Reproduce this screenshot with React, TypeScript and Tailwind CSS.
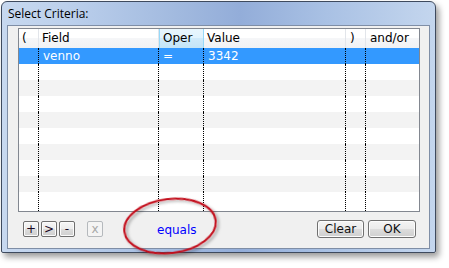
import React from "react";

const cols = [20, 120, 45, 142, 20, 53];
const headers = ["(", "Field", "Oper", "Value", ")", "and/or"];
const pads = [3, 3, 3, 3, 4, 4];

function Row({ kind, cells, grow }: { kind: "sel" | "w" | "g"; cells?: string[]; grow?: boolean }) {
  const bg = kind === "sel" ? "bg-[#3399ff] text-white" : kind === "g" ? "bg-[#f3f3f3]" : "bg-white";
  return (
    <div className={`flex ${grow ? "flex-1" : "h-[16px]"} ${bg}`}>
      {cols.map((w, i) => (
        <div
          key={i}
          style={{ width: w, paddingLeft: pads[i] + 1 }}
          className={`shrink-0 leading-[16px] whitespace-nowrap ${i < 5 ? "border-r border-dotted border-black" : ""}`}
        >
          {cells ? cells[i] : ""}
        </div>
      ))}
    </div>
  );
}

function SmallBtn({ label, disabled }: { label: string; disabled?: boolean }) {
  return (
    <div
      className={`w-[16px] h-[16px] rounded-[2px] border flex items-center justify-center text-[12px] leading-none ${
        disabled
          ? "border-[#b5b9bd] bg-[#f4f4f4] text-[#a8a8a8]"
          : "border-[#6f6f6f] bg-[linear-gradient(to_bottom,#f6f6f6_0%,#ececec_50%,#dcdcdc_50%,#cfcfcf_100%)] text-[#1a0a24] shadow-[inset_0_0_0_1px_#fbfbfb]"
      }`}
    >
      {label}
    </div>
  );
}

function Btn({ label, w }: { label: string; w: number }) {
  return (
    <div
      style={{ width: w }}
      className="h-[18px] rounded-[3px] border border-[#707070] bg-[linear-gradient(to_bottom,#f4f4f4_0%,#ebebeb_50%,#dddddd_50%,#cfcfcf_100%)] shadow-[inset_0_0_0_1px_#fcfcfc] flex items-center justify-center text-[12px] text-[#101010]"
    >
      {label}
    </div>
  );
}

export default function App() {
  return (
    <div className="relative w-[449px] h-[268px] bg-white overflow-hidden" style={{ fontFamily: '"DejaVu Sans", Verdana, sans-serif' }}>
      <div className="ml-[1px] mt-[1px] w-[435px] h-[252px] border border-[#3e4a5e] rounded-t-[6px] rounded-b-[2px] shadow-[3px_4px_6px_rgba(0,0,0,0.4)] flex flex-col bg-[linear-gradient(to_right,#c7d8ef_0%,#bcd0ec_15%,#a2badf_40%,#93add9_55%,#a9c1e4_75%,#c4d6ee_100%)]">
        <div className="h-[23px] shrink-0 flex items-center pl-[6px] pt-[1px] text-[12px] text-black" style={{ fontFamily: '"Open Sans", "Noto Sans", sans-serif' }}>
          Select Criteria:
        </div>
        <div className="mx-[5px] h-[224px] shrink-0 border border-[#7f8ea6] bg-[#f0f0f0] flex flex-col">
          <div className="ml-[10px] mt-[2px] w-[402px] h-[184px] border border-[#828790] bg-white flex flex-col text-[12px] text-black">
            <div className="flex h-[19px] shrink-0 bg-[linear-gradient(to_bottom,#ffffff_0%,#ffffff_50%,#f5f6f8_50%,#f1f2f4_100%)]">
              {cols.map((w, i) => (
                <div
                  key={i}
                  style={{ width: w, paddingLeft: pads[i] }}
                  className={`shrink-0 leading-[18px] whitespace-nowrap border-r ${
                    i === 2
                      ? "border-[#96d9f9] border-l bg-[linear-gradient(to_bottom,#e8f6fd_0%,#e0f3fd_50%,#cfeafa_50%,#c3e4f7_100%)]"
                      : "border-[#e2e5ea]"
                  } ${i === 5 ? "border-r-0" : ""}`}
                >
                  {headers[i]}
                </div>
              ))}
            </div>
            <div className="flex-1 flex flex-col">
              <Row kind="sel" cells={["", "venno", "=", "3342", "", ""]} />
              <Row kind="w" />
              <Row kind="g" />
              <Row kind="w" />
              <Row kind="g" />
              <Row kind="w" />
              <Row kind="g" />
              <Row kind="w" />
              <Row kind="g" />
              <Row kind="w" grow />
            </div>
          </div>
          <div className="mt-[8px] h-[18px] flex items-center pl-[15px] pr-[13px] text-[12px]">
            <div className="flex gap-[2px]">
              <SmallBtn label="+" />
              <SmallBtn label=">" />
              <SmallBtn label="-" />
            </div>
            <div className="ml-[12px]">
              <SmallBtn label="x" disabled />
            </div>
            <div className="ml-[54px] text-[#0000ff] text-[12px] leading-none pt-[2px]">equals</div>
            <div className="flex-1" />
            <div className="flex gap-[4px]">
              <Btn label="Clear" w={47} />
              <Btn label="OK" w={48} />
            </div>
          </div>
        </div>
      </div>
      <svg className="absolute left-0 top-0 pointer-events-none" width="449" height="268" viewBox="0 0 449 268">
        <defs>
          <filter id="sh" x="-20%" y="-20%" width="140%" height="140%">
            <feDropShadow dx="2" dy="2" stdDeviation="1.5" floodColor="#000" floodOpacity="0.35" />
          </filter>
        </defs>
        <ellipse cx="170" cy="226" rx="46" ry="27" transform="rotate(-7 170 226)" fill="none" stroke="#c3111b" strokeWidth="2" filter="url(#sh)" />
      </svg>
    </div>
  );
}
